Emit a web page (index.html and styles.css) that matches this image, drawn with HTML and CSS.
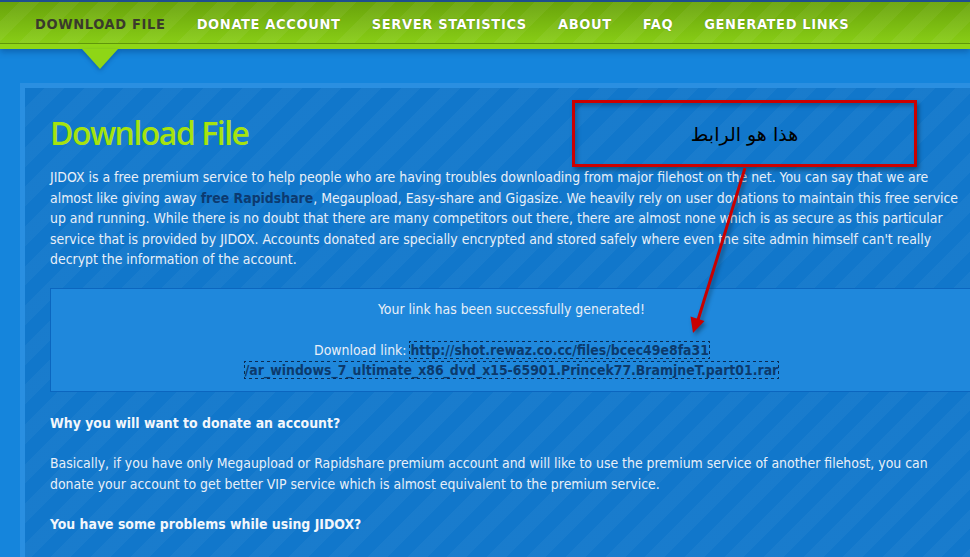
FILE: index.html
```html
<!DOCTYPE html>
<html>
<head>
  <meta charset="utf-8">
  <meta name="viewport" content="width=device-width, initial-scale=1.0">
  <title>JIDOX - Download File</title>
  <link rel="stylesheet" href="styles.css">
</head>
<body>
  <nav class="menu">
    <ul>
      <li class="active"><a href="#">DOWNLOAD FILE</a></li>
      <li><a href="#">DONATE ACCOUNT</a></li>
      <li><a href="#">SERVER STATISTICS</a></li>
      <li><a href="#">ABOUT</a></li>
      <li><a href="#">FAQ</a></li>
      <li><a href="#">GENERATED LINKS</a></li>
    </ul>
  </nav>

  <div class="main">
    <div class="panel">
      <h1>Download File</h1>
      <p class="intro">JIDOX is a free premium service to help people who are having troubles downloading from major filehost on the net. You can say that we are almost like giving away <a class="strong-link" href="#">free Rapidshare</a>, Megaupload, Easy-share and Gigasize. We heavily rely on user donations to maintain this free service up and running. While there is no doubt that there are many competitors out there, there are almost none which is as secure as this particular service that is provided by JIDOX. Accounts donated are specially encrypted and stored safely where even the site admin himself can't really decrypt the information of the account.</p>

      <div class="notice">
        Your link has been successfully generated!<br><br>
        Download link: <a class="dl" href="#">http://shot.rewaz.co.cc/files/bcec49e8fa31<br>/ar_windows_7_ultimate_x86_dvd_x15-65901.Princek77.BramjneT.part01.rar</a>
      </div>

      <p class="q">Why you will want to donate an account?</p>
      <p>Basically, if you have only Megaupload or Rapidshare premium account and will like to use the premium service of another filehost, you can donate your account to get better VIP service which is almost equivalent to the premium service.</p>
      <p class="q">You have some problems while using JIDOX?</p>
    </div>
  </div>

  <!-- annotation drawn over the screenshot -->
  <div class="note" dir="rtl">هذا هو الرابط</div>
  <svg class="arrow" width="970" height="557" viewBox="0 0 970 557">
    <line x1="745" y1="168" x2="698" y2="320" stroke="#c80000" stroke-width="3"/>
    <polygon points="693,333 690.5,316.5 704.5,321" fill="#c80000"/>
  </svg>
</body>
</html>
```

FILE: styles.css
```css
html, body {
  margin: 0;
  overflow: hidden;
}
body {
  background: #1585dc;
  font-family: "DejaVu Sans Condensed", "DejaVu Sans", sans-serif;
  font-size: 13.9px;
  color: #e8eff8;
  height: 557px;
  position: relative;
}

/* top menu */
.menu {
  border-top: 2px solid #1e4e8e;
  height: 41px;
  background:
    repeating-linear-gradient(135deg, rgba(255,255,255,0) 0 14px, rgba(255,255,255,.05) 14px 28px),
    linear-gradient(#69a30b, #88cd16);
  border-bottom: 1px solid #5f960a;
  box-shadow: 0 5px 0 #8fd616, 0 8px 6px rgba(0, 40, 100, .35);
  position: relative;
  z-index: 2;
}
.menu ul {
  list-style: none;
  margin: 0;
  padding: 3px 0 0 35px;
  box-sizing: border-box;
  display: flex;
  gap: 31px;
  height: 100%;
}
.menu li {
  display: flex;
  align-items: center;
  position: relative;
}
.menu a {
  color: #fff;
  text-decoration: none;
  font-weight: bold;
  font-size: 14.5px;
  letter-spacing: 0.65px;
  text-shadow: 0 0 1px rgba(40, 70, 0, .6);
}
.menu li.active a {
  color: #3a3a2c;
  text-shadow: none;
}
.menu li.active::after {
  content: "";
  position: absolute;
  top: calc(100% + 6px);
  left: 50%;
  margin-left: -18px;
  border-left: 18px solid transparent;
  border-right: 18px solid transparent;
  border-top: 20px solid #8fd616;
  filter: drop-shadow(0 2px 2px rgba(0, 40, 100, .35));
}

/* content */
.main {
  padding: 39px 0 0 20px;
}
.panel {
  box-sizing: border-box;
  width: 978px;
  min-height: 480px;
  border: 5px solid #2a8fe1;
  border-right: 0;
  border-bottom: 0;
  background:
    repeating-linear-gradient(135deg, rgba(255,255,255,0) 0 14px, rgba(255,255,255,.035) 14px 28px),
    #1177cb;
  padding: 25px 25px 0 25px;
}
h1 {
  margin: 0 0 14px;
  font-family: "Open Sans", sans-serif;
  font-weight: 600;
  font-size: 32px;
  line-height: 40px;
  letter-spacing: -1.5px;
  color: #a6e30e;
}
p {
  margin: 0 0 20px;
  line-height: 20.5px;
}
p.intro {
  margin-bottom: 18px;
}
p.q {
  font-weight: bold;
  color: #f2f6fb;
}
.strong-link {
  color: #0c3a70;
  font-weight: bold;
  text-decoration: none;
}
.notice {
  border: 1px solid #0b66bf;
  background: #1f88dc;
  text-align: center;
  line-height: 20.5px;
  padding: 10px;
  margin-bottom: 21px;
}
.dl {
  color: #0c3a6c;
  font-weight: bold;
  text-decoration: none;
  outline: 1px dotted #0a2a52;
}

/* annotation */
.note {
  position: absolute;
  left: 572px;
  top: 100px;
  width: 345px;
  height: 67px;
  box-sizing: border-box;
  border: 3px solid #cc0000;
  box-shadow: 2px 3px 4px rgba(0, 0, 0, .35), inset 2px 3px 4px rgba(0, 0, 0, .25);
  display: flex;
  align-items: center;
  justify-content: center;
  color: #000;
  font-family: "DejaVu Sans", sans-serif;
  font-size: 19px;
  z-index: 3;
}
.arrow {
  position: absolute;
  left: 0;
  top: 0;
  z-index: 3;
  filter: drop-shadow(2px 3px 2px rgba(0, 0, 0, .35));
}
```
